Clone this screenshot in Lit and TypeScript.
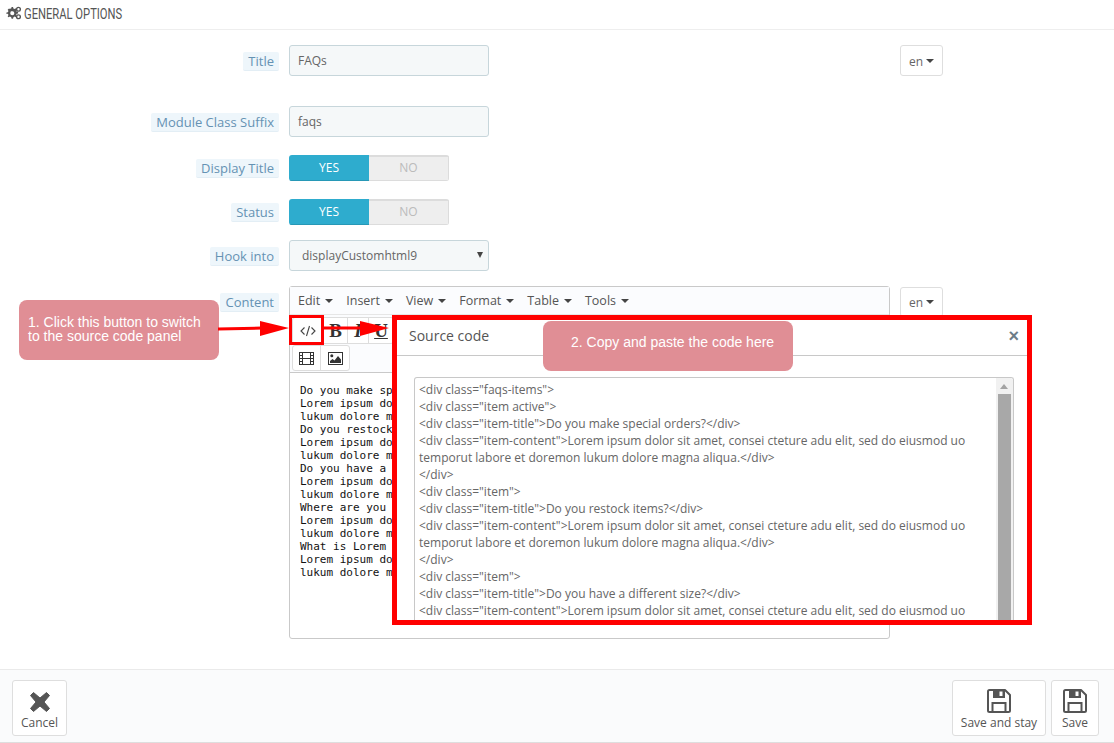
import { LitElement, html, css, svg } from "lit";
import { customElement } from "lit/decorators.js";

const codeLines = [
  '<div class="faqs-items">',
  '<div class="item active">',
  '<div class="item-title">Do you make special orders?</div>',
  '<div class="item-content">Lorem ipsum dolor sit amet, consei cteture adu elit, sed do eiusmod uo',
  'temporut labore et doremon lukum dolore magna aliqua.</div>',
  '</div>',
  '<div class="item">',
  '<div class="item-title">Do you restock items?</div>',
  '<div class="item-content">Lorem ipsum dolor sit amet, consei cteture adu elit, sed do eiusmod uo',
  'temporut labore et doremon lukum dolore magna aliqua.</div>',
  '</div>',
  '<div class="item">',
  '<div class="item-title">Do you have a different size?</div>',
  '<div class="item-content">Lorem ipsum dolor sit amet, consei cteture adu elit, sed do eiusmod uo',
];

const editorLines = [
  "Do you make special orders?",
  "Lorem ipsum dolor sit amet, consei",
  "lukum dolore magna aliqua.",
  "Do you restock items?",
  "Lorem ipsum dolor sit amet, consei",
  "lukum dolore magna aliqua.",
  "Do you have a different size?",
  "Lorem ipsum dolor sit amet, consei",
  "lukum dolore magna aliqua.",
  "Where are you located?",
  "Lorem ipsum dolor sit amet, consei",
  "lukum dolore magna aliqua.",
  "What is Lorem Ipsum?",
  "Lorem ipsum dolor sit amet, consei",
  "lukum dolore magna aliqua.",
];

const floppy = svg`<svg viewBox="0 0 24 24" width="24" height="24">
  <path fill="none" stroke="#555" stroke-width="2" stroke-linejoin="round" d="M2.500 1H18l5 5v15.500a1.500 1.500 0 0 1-1.500 1.500h-19A1.500 1.500 0 0 1 1 21.500v-19A1.500 1.500 0 0 1 2.500 1z"/>
  <path fill="#555" fill-rule="evenodd" d="M6 1h12v8H6zM12.500 2.500v4.500h3V2.500z"/>
  <path fill="none" stroke="#555" stroke-width="2" d="M5.500 23V14h13v9"/>
</svg>`;

@customElement("app-root")
export class AppRoot extends LitElement {
  static styles = css`
    :host {
      display: block;
      position: relative;
      width: 1114px;
      height: 743px;
      overflow: hidden;
      background: #fff;
      font-family: "Open Sans", sans-serif;
      font-size: 12px;
      color: #666;
    }
    .head {
      height: 29px;
      border-bottom: 1px solid #eee;
      display: flex;
      align-items: center;
      gap: 3px;
      padding-left: 6px;
      color: #555;
    }
    .head span {
      font-family: "Liberation Sans Narrow", "Roboto", sans-serif;
      font-size: 14px;
      display: inline-block;
      transform: scaleX(0.8);
      transform-origin: left center;
      margin-top: -2px;
      white-space: nowrap;
    }
    .head svg { margin-top: -3px; }
    .form { padding-top: 15px; height: 639px; box-sizing: border-box; }
    .row { display: flex; gap: 10px; align-items: flex-start; }
    .row.g30 { margin-top: 30px; }
    .row.g18 { margin-top: 18px; }
    .row.g15 { margin-top: 15px; }
    .lab { width: 279px; text-align: right; flex: none; }
    .lab b {
      display: inline-block;
      font-weight: 400;
      font-size: 13px;
      height: 19px;
      line-height: 18px;
      padding: 0 5px;
      background: #eef6fb;
      border-bottom: 1px solid #e3eef5;
      border-radius: 2px;
      color: #6592b3;
      box-sizing: border-box;
    }
    .l7 { padding-top: 7px; }
    .l5 { padding-top: 4px; }
    .inp {
      width: 200px;
      height: 31px;
      box-sizing: border-box;
      background: #f5f8f9;
      border: 1px solid #c7d6db;
      border-radius: 3px;
      padding: 0 8px;
      line-height: 30px;
      color: #666;
      position: relative;
    }
    .sel { padding-left: 12px; line-height: 30px; }
    .sel i {
      position: absolute;
      right: 5px;
      top: 11px;
      width: 0;
      height: 0;
      border: 3px solid transparent;
      border-top: 6px solid #444;
    }
    .lang {
      width: 43px;
      height: 31px;
      box-sizing: border-box;
      margin-left: 401px;
      padding-top: 1px;
      border: 1px solid #dedede;
      border-radius: 3px;
      display: flex;
      align-items: center;
      justify-content: center;
      gap: 3px;
      color: #666;
      background: #fff;
    }
    .caret {
      display: inline-block;
      width: 0;
      height: 0;
      border-left: 4px solid transparent;
      border-right: 4px solid transparent;
      border-top: 4px solid #444;
    }
    .lang.low { margin-top: 1px; height: 30px; margin-left: 0; padding-top: 0; }
    .toggle {
      display: flex;
      width: 160px;
      height: 26px;
      border-radius: 3px;
      overflow: hidden;
      font-size: 12px;
      line-height: 25px;
      text-align: center;
    }
    .toggle .y { width: 80px; background: #2eacce; color: #fff; border-bottom: 1px solid #2798b6; box-sizing: border-box; }
    .toggle .n {
      width: 80px;
      background: #eee;
      color: #bbb;
      border: 1px solid #dcdcdc;
      border-left: none;
      border-top-width: 2px;
      box-sizing: border-box;
      line-height: 22px;
    }
    .editor {
      width: 601px;
      height: 353px;
      box-sizing: border-box;
      border: 1px solid #c9c9c9;
      border-radius: 3px;
      background: #fff;
      display: flex;
      flex-direction: column;
    }
    .menu {
      height: 28px;
      box-sizing: border-box;
      display: flex;
      align-items: center;
      gap: 13px;
      padding-left: 8px;
      background: #fbfcfe;
      border-bottom: 1px solid #e6e6e6;
      color: #555;
      font-size: 12.500px;
    }
    .menu span { display: flex; align-items: center; gap: 5px; }
    .tools {
      height: 58px;
      box-sizing: border-box;
      border-bottom: 1px solid #c9c9c9;
      background: #fbfcfe;
      padding: 2px 0 0 2px;
    }
    .tgroup {
      display: inline-flex;
      border: 1px solid #ddd;
      border-radius: 3px;
      height: 27px;
      box-sizing: border-box;
      background: #fff;
      vertical-align: top;
    }
    .tgroup.second { display: flex; width: fit-content; margin-top: 1px; height: 26px; }
    .tb {
      width: 24px;
      display: flex;
      align-items: center;
      justify-content: center;
      border-right: 1px solid #ddd;
      color: #333;
      font-family: "Liberation Serif", serif;
      font-size: 19px;
      font-weight: 700;
      box-sizing: border-box;
    }
    .tb:last-child { border-right: none; }
    .tb.code { width: 31px; }
    .tb.i { width: 21px; }
    .tgroup.second .tb { width: 28px; }
    .body {
      width: 102px;
      box-sizing: border-box;
      padding: 11px 0 11px 10px;
      font-family: "DejaVu Sans Mono", monospace;
      font-size: 11px;
      line-height: 13px;
      color: #111;
      white-space: pre;
      overflow: hidden;
    }
    .foot {
      border-top: 1px solid #eaeaea;
      border-bottom: 1px solid #dedede;
      background: #fafbfc;
      display: flex;
      align-items: flex-start;
      padding: 10px 15px 0 12px;
      gap: 5px;
      box-sizing: content-box;
      height: 62px;
      color: #555;
    }
    .foot .sp { flex: 1; }
    .btn {
      height: 56px;
      box-sizing: border-box;
      background: #fff;
      border: 1px solid #dedede;
      border-radius: 3px;
      display: flex;
      flex-direction: column;
      align-items: center;
      justify-content: flex-start;
      padding-top: 8px;
      font-size: 12px;
      line-height: 16px;
      color: #555;
      gap: 2px;
    }
    .btn.cancel { width: 55px; padding-top: 11px; gap: 3px; }
    .btn.stay { width: 94px; }
    .btn.save { width: 48px; }
    .note {
      position: absolute;
      background: #e08e95;
      color: #fff;
      font-family: "Liberation Sans", sans-serif;
      font-size: 14px;
      line-height: 14px;
      border-radius: 8px;
      box-sizing: border-box;
      z-index: 3;
    }
    .note.a { left: 19px; top: 300px; width: 200px; height: 60px; padding: 15px 9px; }
    .note.b { left: 543px; top: 321px; width: 250px; height: 50px; padding: 14px 28px; white-space: nowrap; }
    .modal {
      position: absolute;
      left: 392px;
      top: 315px;
      width: 640px;
      height: 310px;
      box-sizing: border-box;
      border: 5px solid #f00;
      background: #fff;
      z-index: 2;
    }
    .mhead {
      height: 36px;
      box-sizing: border-box;
      border-bottom: 1px solid #c8c8c8;
      display: flex;
      align-items: center;
      justify-content: space-between;
      padding: 0 8px 4px 12px;
      font-size: 14px;
      color: #555;
    }
    .mhead i {
      font-style: normal;
      font-family: "Liberation Sans", sans-serif;
      font-weight: 700;
      font-size: 18px;
      color: #6d7d88;
      margin-top: 2px;
    }
    .ta {
      position: absolute;
      left: 17px;
      top: 57px;
      width: 600px;
      height: 243px;
      box-sizing: border-box;
      border: 1px solid #c8c8c8;
      border-bottom: none;
      border-radius: 3px 3px 0 0;
      padding: 3px 0 0 4px;
      font-size: 12px;
      line-height: 17px;
      color: #666;
      white-space: pre;
      overflow: hidden;
    }
    .sb {
      position: absolute;
      right: 0;
      top: 0;
      bottom: 0;
      width: 17px;
      background: #f1f1f1;
    }
    .sb .arrow {
      position: absolute;
      left: 4px;
      top: 6px;
      width: 0;
      height: 0;
      border-left: 4px solid transparent;
      border-right: 4px solid transparent;
      border-bottom: 5px solid #a3a3a3;
    }
    .sb .thumb {
      position: absolute;
      left: 2px;
      right: 2px;
      top: 16px;
      bottom: 0;
      background: #a8a8a8;
    }
    .annot {
      position: absolute;
      left: 0;
      top: 0;
      z-index: 4;
      pointer-events: none;
    }
  `;

  render() {
    return html`
      <div class="head">
        <svg width="15" height="14" viewBox="1 0 16 14">
          <path fill="#555" fill-rule="evenodd" d="M5 2.500l1.500-.4.500-1.600h1.500l.4 1.600 1.300.6 1.400-.8 1 1-.8 1.400.6 1.300 1.500.4v1.500l-1.500.4-.6 1.300.8 1.400-1 1-1.400-.8-1.300.6-.4 1.600H7l-.5-1.600-1.300-.6-1.400.8-1-1 .8-1.400-.6-1.300L1.500 8V6.500L3 6.100l.6-1.300-.8-1.400 1-1zM7.700 5a2.200 2.200 0 1 0 0 4.400 2.200 2.200 0 0 0 0-4.400z"/>
          <circle cx="14.300" cy="3" r="2" fill="none" stroke="#555" stroke-width="1.500"/>
          <circle cx="14.300" cy="11" r="2" fill="none" stroke="#555" stroke-width="1.500"/>
        </svg>
        <span>GENERAL OPTIONS</span>
      </div>
      <div class="form">
        <div class="row">
          <div class="lab l7"><b>Title</b></div>
          <div class="inp">FAQs</div>
          <div class="lang">en <i class="caret"></i></div>
        </div>
        <div class="row g30">
          <div class="lab l7"><b>Module Class Suffix</b></div>
          <div class="inp">faqs</div>
        </div>
        <div class="row g18">
          <div class="lab l5"><b>Display Title</b></div>
          <div class="toggle"><div class="y">YES</div><div class="n">NO</div></div>
        </div>
        <div class="row g18">
          <div class="lab l5"><b>Status</b></div>
          <div class="toggle"><div class="y">YES</div><div class="n">NO</div></div>
        </div>
        <div class="row g15">
          <div class="lab l7"><b>Hook into</b></div>
          <div class="inp sel">displayCustomhtml9<i></i></div>
        </div>
        <div class="row g15">
          <div class="lab l7"><b>Content</b></div>
          <div class="editor">
            <div class="menu">
              <span>Edit <i class="caret"></i></span>
              <span>Insert <i class="caret"></i></span>
              <span>View <i class="caret"></i></span>
              <span>Format <i class="caret"></i></span>
              <span>Table <i class="caret"></i></span>
              <span>Tools <i class="caret"></i></span>
            </div>
            <div class="tools">
              <div class="tgroup">
                <div class="tb code">
                  <svg width="16" height="12" viewBox="0 0 16 12" fill="none" stroke="#444" stroke-width="1.100"><path d="M4.500 2.500L1 6l3.500 3.500M11.500 2.500L15 6l-3.500 3.500M9.500 1L6.500 11"/></svg>
                </div>
                <div class="tb">B</div>
                <div class="tb i"><em>I</em></div>
                <div class="tb"><u>U</u></div>
              </div>
              <div class="tgroup second">
                <div class="tb">
                  <svg width="15" height="13" viewBox="0 0 15 13"><path fill="#333" fill-rule="evenodd" d="M0 0h15v13H0zM1 1v2h2V1zM4 1v5h7V1zM12 1v2h2V1zM1 4v2h2V4zM12 4v2h2V4zM1 7v2h2V7zM4 7v5h7V7zM12 7v2h2V7zM1 10v2h2v-2zM12 10v2h2v-2z"/></svg>
                </div>
                <div class="tb">
                  <svg width="15" height="13" viewBox="0 0 15 13"><path fill="#333" fill-rule="evenodd" d="M0 0h15v13H0zM1 1v11h13V1z"/><circle cx="3.800" cy="3.800" r="1.500" fill="#333"/><path fill="#333" d="M2 11V9l2.500-2 2 1.500L10 4l3 3.500V11z"/></svg>
                </div>
              </div>
            </div>
            <div class="body">${editorLines.join("\n")}</div>
          </div>
          <div class="lang low">en <i class="caret"></i></div>
        </div>
      </div>
      <div class="foot">
        <div class="btn cancel">
          <svg width="20" height="20" viewBox="0 0 20 20"><path fill="#555" d="M3.500 0.500L10 6l6.500-5.500 3 3L14 10l5.500 6.500-3 3L10 14l-6.500 5.500-3-3L6 10 .5 3.500z" stroke="#555" stroke-linejoin="round"/></svg>
          <span>Cancel</span>
        </div>
        <div class="sp"></div>
        <div class="btn stay">${floppy}<span>Save and stay</span></div>
        <div class="btn save">${floppy}<span>Save</span></div>
      </div>

      <div class="note a">1. Click this button to switch to the source code panel</div>
      <div class="note b">2. Copy and paste the code here</div>
      <div class="modal">
        <div class="mhead"><span>Source code</span><i>×</i></div>
        <div class="ta">${codeLines.join("\n")}<div class="sb"><div class="arrow"></div><div class="thumb"></div></div></div>
      </div>
      <svg class="annot" width="1114" height="743" viewBox="0 0 1114 743">
        <rect x="290.500" y="316.500" width="32" height="27" fill="none" stroke="#f00" stroke-width="3"/>
        <path d="M218 329L262 328" stroke="#f00" stroke-width="3" fill="none"/>
        <path d="M260 321L289 328L260 336z" fill="#f00"/>
        <path d="M322 328L362 328" stroke="#f00" stroke-width="3" fill="none"/>
        <path d="M360 321L389 328L360 336z" fill="#f00"/>
      </svg>
    `;
  }
}
